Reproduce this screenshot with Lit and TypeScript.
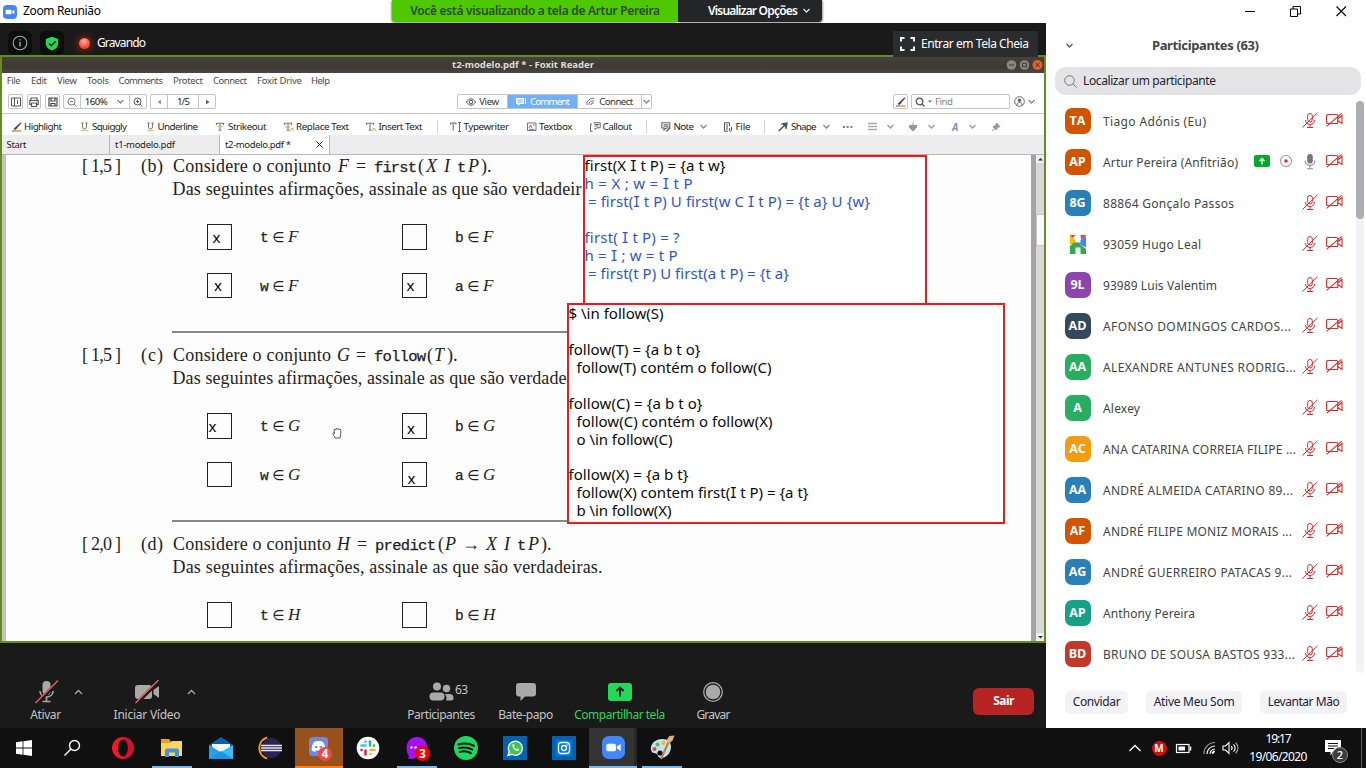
import { LitElement, html, svg, css, nothing } from "lit";
import { customElement } from "lit/decorators.js";

type Item = { x: number; w: number; c: unknown; k?: string };
const it = (x: number, w: number, c: unknown, k = ""): Item => ({ x, w, c, k });

/** Text set to a given measure; the tracking is computed after render. */
const fit = (s: string, w: number, k = "") => html`<span class="fit ${k}" data-w=${w}>${s}</span>`;

/** Lays items in a flex row; the gaps come from the x values in the data. */
const row = (k: string, items: Item[], start = 0) => {
  let end = start;
  return html`<div class="row ${k}">${items.map((i) => {
    const m = i.x - end;
    end = i.x + i.w;
    return html`<div class="cell ${i.k}" style="margin-left:${m}px;width:${i.w}px">${i.c}</div>`;
  })}</div>`;
};

const ic = (w: number, h: number, body: unknown, k = "") =>
  html`<svg class="ic ${k}" width=${w} height=${h} viewBox="0 0 ${w} ${h}" fill="none">${body}</svg>`;

const chev = (c: string, up = false) =>
  ic(9, 6, svg`<path d=${up ? "M1 5 4.5 1.5 8 5" : "M1.5 1 4.5 4 7.5 1"} stroke=${c} stroke-width="1.3"/>`);

const micOff = ic(16, 17, svg`<g stroke="#e02828" stroke-width="1"><rect x="5.7" y="1.5" width="4.6" height="8.5" rx="2.3"/><path d="M3.5 8c0 6 9 6 9 0M8 12.5v3M5 15.5h6M.5 15.5 15.5.8"/></g>`);
const camOff = ic(17, 14, svg`<g stroke="#e02828" stroke-width="1.1"><path d="M12 10.5H1.6a1 1 0 0 1-1-1v-7a1 1 0 0 1 1-1h8.9a1.2 1.2 0 0 1 1.2 1.2v8M11.7 6 16 2.5v8L11.7 7.5M.6 13.4 15.6.4"/></g>`);
const micOn = ic(16, 17, svg`<rect x="5.2" y="1" width="5.6" height="9.5" rx="2.8" fill="#75757f"/><path d="M3.2 7.5c0 6.5 9.6 6.5 9.6 0M8 12.5v3M5 15.7h6" stroke="#8c8c94" stroke-width="1.1"/>`);

const people: [string, string, string, number][] = [
  ["TA", "#d35400", "Tiago Adónis (Eu)", 103],
  ["AP", "#d35400", "Artur Pereira (Anfitrião)", 135],
  ["8G", "#2980b9", "88864 Gonçalo Passos", 131],
  ["", "", "93059 Hugo Leal", 98],
  ["9L", "#8e44ad", "93989 Luis Valentim", 114],
  ["AD", "#34495e", "AFONSO DOMINGOS CARDOS...", 188],
  ["AA", "#27ae60", "ALEXANDRE ANTUNES RODRIG...", 193],
  ["A", "#27ae60", "Alexey", 37],
  ["AC", "#f39c12", "ANA CATARINA CORREIA FILIPE ...", 193],
  ["AA", "#2980b9", "ANDRÉ ALMEIDA CATARINO 89...", 190],
  ["AF", "#d35400", "ANDRÉ FILIPE MONIZ MORAIS ...", 189],
  ["AG", "#2980b9", "ANDRÉ GUERREIRO PATACAS 9...", 189],
  ["AP", "#16a085", "Anthony Pereira", 92],
  ["BD", "#c0392b", "BRUNO DE SOUSA BASTOS 933...", 192],
];

const hLogo = ic(18, 20, svg`<path d="M1 1h5.500l-3 3.500z" fill="#ea4335"/><path d="M1 1.500 6.500 6v5L1 10z" fill="#fbbc05"/><path d="M11.500 1h5.500L12 5.500z" fill="#ea4335"/><path d="M17 1v12.500L8 8.500h3.500V6z" fill="#4285f4"/><path d="M1 20v-8l4-3.500h4L17 15v5h-5.500v-6.500h-5V20z" fill="#34a853"/>`);

type Box = { mark?: [number, number]; sym: string };
type Question = { pts: string; id: string; v: string; head: Item[]; body: [string, number]; rows: Box[][]; rule: boolean };
const tt = "tt", mi = "mi";
const xitp = (x: number): Item[] => [
  it(x, 17, fit("X", 15, mi)), it(x + 18, 9, fit("I", 7, mi)), it(x + 31, 8, fit("t", 8, tt)), it(x + 42, 12, fit("P", 11, mi)), it(x + 55, 11, ")."),
];
const questions: Question[] = [
  {
    pts: "[ 1,5 ]", id: "(b)", v: "F", rule: true, body: ["Das seguintes afirmações, assinale as que são verdadeir", 409],
    head: [it(338, 13, fit("F", 12, mi)), it(356, 12, fit("=", 12)), it(374, 44, fit("first", 43, tt)), it(418, 6, "("), ...xitp(426)],
    rows: [[{ mark: [4.5, 0], sym: "t" }, { sym: "b" }], [{ mark: [6, 0], sym: "w" }, { mark: [3.5, 0], sym: "a" }]],
  },
  {
    pts: "[ 1,5 ]", id: "(c)", v: "G", rule: true, body: ["Das seguintes afirmações, assinale as que são verdade", 394],
    head: [it(337, 13, fit("G", 12, mi)), it(356, 12, fit("=", 12)), it(374, 53, fit("follow", 52, tt)), it(427, 6, "("), it(434, 12, fit("T", 11, mi)), it(447, 12, ").")],
    rows: [[{ mark: [0.5, 0], sym: "t" }, { mark: [4, 2], sym: "b" }], [{ sym: "w" }, { mark: [4.5, 4], sym: "a" }]],
  },
  {
    pts: "[ 2,0 ]", id: "(d)", v: "H", rule: false, body: ["Das seguintes afirmações, assinale as que são verdadeiras.", 430],
    head: [it(337, 15, fit("H", 13, mi)), it(357, 12, fit("=", 12)), it(375, 63, fit("predict", 61, tt)), it(438, 6, "("), it(445, 12, fit("P", 11, mi)), it(462, 20, fit("→", 17)), ...xitp(486)],
    rows: [[{ sym: "t" }, { sym: "b" }]],
  },
];

const question = (q: Question) => html`<section class="q">
  ${row("ln", [it(82, 41, fit(q.pts, 39)), it(141, 24, fit(q.id, 22)), it(173, 160, fit("Considere o conjunto", 158)), ...q.head], 6)}
  ${row("ln", [it(172.500, 432, fit(q.body[0], q.body[1]))], 6)}
  <div class="opts">${q.rows.map((r) => row("opt", r.flatMap((b, i) => [
    it(207 + i * 195, 25, b.mark ? html`<span style="margin-left:${b.mark[0]}px;margin-top:${b.mark[1] * 2}px">x</span>` : nothing, "box"),
    it(260 + i * 195, 41, html`<span class="tt">${b.sym}</span><span class="in">∈</span><span class="mi">${q.v}</span>`, "sym"),
  ]), 6))}</div>
  ${q.rule ? html`<div class="rule"></div>` : nothing}
</section>`;

const noteLine = (pad: number, s: string, w: number, k = "") =>
  html`<div class="nl ${k}" style="padding-left:${pad}px">${w ? html`<span class="fit" data-w=${w}>${s.split(/(I)/).map((p) => (p === "I" ? html`<span class="ci">I</span>` : p))}</span>` : nothing}</div>`;

const U = (extra: unknown = nothing) => ic(10, 10, svg`<path d="M2.5 1v4a2 2 0 0 0 4 0V1M1.3 1h2.4M5.4 1h2.4" stroke="#777" stroke-width="1"/>${extra}`);
const pen = ic(11, 10, svg`<path d="M9.5.5 3.5 6l-1 1 2 1L10.5 1z" fill="#444"/><path d="M1 9h3" stroke="#555"/><path d="M4 9h6.5" stroke="#f0a030" stroke-width="1.6"/>`);
const T = (extra: unknown) => ic(11, 10, svg`<path d="M.5 3V1.3h7V3M4 1.3v7M2.6 8.3h2.8" stroke="#777" stroke-width="1.1"/>${extra}`);
const grayChev = chev("#888");

const zoomCam = (s: number) => html`<svg class="ic" width=${s} height=${s} viewBox="0 0 24 24"><rect width="24" height="24" rx="7" fill="#4087fc"/><rect x="4.5" y="8" width="10" height="8" rx="2" fill="#fff"/><path d="m15.5 11 4-2.7v7.4l-4-2.7z" fill="#fff"/></svg>`;

const tools: Item[] = [
  it(20.500, 50, html`${ic(28, 26, svg`<rect x="10.500" y="2" width="8" height="14" rx="4" fill="#a9a9a9"/><path d="M8 12c0 8 13 8 13 0M14.500 18v4M10.500 22.500h8" stroke="#a9a9a9" stroke-width="1.600"/><path d="M4 25 27 2" stroke="#1a1a1a" stroke-width="3.600"/><path d="M3.500 24 26 1.500" stroke="#ef5b5b" stroke-width="1.400"/>`)}${fit("Ativar", 31)}`),
  it(74, 9, html`${chev("#a9a9a9", true)}`, "caret"),
  it(107, 80, html`${ic(28, 26, svg`<rect x="2" y="6" width="17" height="14" rx="3" fill="#a9a9a9"/><path d="M20.5 11 26 7v12l-5.500-4z" fill="#a9a9a9"/><path d="M3 25 26 2" stroke="#1a1a1a" stroke-width="3.600"/><path d="M2.500 24 25.500 1" stroke="#ef5b5b" stroke-width="1.400"/>`)}${fit("Iniciar Vídeo", 67)}`),
  it(187, 9, html`${chev("#a9a9a9", true)}`, "caret"),
  it(401, 80, html`<div class="ppl">${ic(25, 26, svg`<g fill="#a9a9a9"><circle cx="8" cy="7.500" r="4"/><rect x=".5" y="13.500" width="15" height="8" rx="4"/><circle cx="17.500" cy="9.500" r="3.700"/><path d="M15.500 15h5a4 4 0 0 1 4 4c0 2-1 2.500-3 2.500h-4.500c1-3 .5-5-1.500-6.500z"/></g>`)}<span class="n63">${fit("63", 13)}</span></div>${fit("Participantes", 68)}`),
  it(490, 71, html`${ic(22, 26, svg`<path d="M4 4h14a3 3 0 0 1 3 3v7.500a3 3 0 0 1-3 3h-8L5.500 22v-4.500H4a3 3 0 0 1-3-3V7a3 3 0 0 1 3-3z" fill="#a9a9a9"/>`)}${fit("Bate-papo", 55)}`),
  it(569, 101, html`${ic(24, 26, svg`<rect y="4" width="24" height="18" rx="3" fill="#23d959"/><path d="M12 17.500V9M8.300 12 12 8.500l3.700 3.500" stroke="#1a1a1a" stroke-width="1.900"/>`)}<span class="grn">${fit("Compartilhar tela", 91)}</span>`),
  it(683, 60, html`${ic(22, 26, svg`<circle cx="11" cy="13" r="9.300" stroke="#a9a9a9" stroke-width="1.300"/><circle cx="11" cy="13" r="7.300" fill="#a9a9a9"/>`)}${fit("Gravar", 34)}`),
  it(973, 61, fit("Sair", 21), "leave"),
];

const task: Item[] = [
  it(0, 48, ic(16, 16, svg`<path d="M0 2.200 6.600 1.300v6.300H0zM7.400 1.200 16 0v7.600H7.400zM0 8.400h6.600v6.300L0 13.800zM7.400 8.400H16V16l-8.600-1.200z" fill="#fff"/>`)),
  it(48, 48, ic(18, 18, svg`<circle cx="11.500" cy="6.500" r="5" stroke="#fff" stroke-width="1.400"/><path d="M8 10 1.500 16.500" stroke="#fff" stroke-width="1.500"/>`)),
  it(99, 48, ic(24, 24, svg`<path fill-rule="evenodd" d="M12 1a11 11 0 1 1 0 22 11 11 0 0 1 0-22zm0 2.500c-3 0-5 3.800-5 8.500s2 8.500 5 8.500 5-3.800 5-8.500-2-8.500-5-8.500z" fill="#f0162c"/><path d="M14 1.200c12 2 12 19.600 0 21.600-2 .2-2.500-1.500-1-2.500 5-3 5-13.600 0-16.600-1.500-1-1-2.700 1-2.500z" fill="#b3122a" opacity=".6"/>`)),
  it(152, 40, ic(24, 22, svg`<path d="M1 2h8l2 3h11v14H1z" fill="#e8a60e"/><path d="M1 6h9l2-2h10v15H1z" fill="#fcd462"/><path d="M5 20v-6.500a2 2 0 0 1 2-2h10a2 2 0 0 1 2 2V20h-4v-4.500H9V20z" fill="#4593d4"/>`), "on"),
  it(197, 48, ic(24, 24, svg`<path d="M0 9 12 1l12 8v14H0z" fill="#0c5fb0"/><path d="M3 8h18v9H3z" fill="#f5f5f5"/><path d="m0 9 13 8L0 23z" fill="#2aa0ea"/><path d="M24 9v14H0z" fill="#35c0f5"/><path d="m0 23 12-8 12 8z" fill="#1d95e6"/>`)),
  it(246, 48, ic(24, 24, svg`<path d="M9 1.500a11 11 0 0 0 0 21" stroke="#f59e1c" stroke-width="2"/><circle cx="13.500" cy="12" r="10" fill="#2c2255"/><path d="M3 9.500h21M3 12h21M3 14.500h21" stroke="#e8e6f0" stroke-width="1.400"/>`)),
  it(295, 48, html`${ic(22, 22, svg`<rect x="1" y="1" width="19" height="19" rx="3.500" fill="#7289da"/><path d="M6 6c3-1.500 6-1.500 9 0 1.700 2.500 2.500 5 2.300 8.500L14 16l-1-1.500H8L7 16l-3.300-1.500C3.500 11 4.300 8.500 6 6z" fill="#fff"/><circle cx="8.200" cy="11" r="1.300" fill="#7289da"/><circle cx="12.700" cy="11" r="1.300" fill="#7289da"/>`)}<b class="badge coral">4</b>`, "disc"),
  it(344, 48, ic(24, 24, svg`<circle cx="12" cy="12" r="11.300" fill="#fff"/><g stroke-width="2.600" stroke-linecap="round"><path d="M5.500 9.500H9.500M9.500 5.500v.1" stroke="#36c5f0"/><path d="M14 5.500v4M18 9.500v.1" stroke="#2eb67d"/><path d="M14.500 14h4M14.500 18v.1" stroke="#ecb22e"/><path d="M9.500 14.500v4M5.500 14v.1" stroke="#e01e5a"/></g>`)),
  it(397, 40, html`${ic(24, 24, svg`<path d="M12 1c6 0 10 4.500 10 9.500S19 20 14 20.500L8 23H3c1-1 1-2 .5-4C1.500 16.500 1.500 14 1.700 11 2 5 6 1 12 1z" fill="#a412f2"/><g fill="#fff"><circle cx="6.500" cy="11.500" r="1.200"/><circle cx="10.500" cy="11.500" r="1.200"/></g>`)}<b class="badge red">3</b>`, "on"),
  it(442, 48, ic(24, 24, svg`<circle cx="12" cy="12" r="12" fill="#1ed760"/><path d="M4.500 8.500c5-1.600 11-1 15.500 1.300M5 12.300c4.500-1.300 9.500-.7 13.300 1.400M5.800 16c3.700-1.200 8-.7 11 1.200" stroke="#101010" stroke-width="2" stroke-linecap="round"/>`)),
  it(491, 48, ic(24, 24, svg`<rect width="24" height="24" fill="#0063b1"/><path d="M5 19.500 6.200 15.500a7 7 0 1 1 2.700 2.800z" fill="#41c351" stroke="#fff" stroke-width="1.300"/><path d="M9.500 8.500c-1 3 3 7 6 6.500l.7-1.700-2-1-1 1c-1-.4-1.800-1.300-2.200-2.200l.8-1-.8-2z" fill="#fff"/>`)),
  it(540, 48, ic(24, 24, svg`<rect width="24" height="24" fill="#0063b1"/><rect x="4" y="4" width="16" height="16" fill="#0078d7"/><rect x="6.500" y="6.500" width="11" height="11" rx="3" stroke="#fff" stroke-width="1.300"/><circle cx="12" cy="12" r="2.500" stroke="#fff" stroke-width="1.300"/><circle cx="15" cy="9" r=".8" fill="#fff"/>`)),
  it(589, 48, zoomCam(23), "zm"),
  it(642, 40, ic(26, 26, svg`<path d="M2 15C1 9 6 4 13 4c6 0 9 3 9 8s-4 11-10 11c-3 0-3-3-4-4s-5 0-6-4z" fill="#bfe3f2"/><circle cx="14.500" cy="8" r="2" fill="#f5b81c"/><circle cx="8.500" cy="9.500" r="2" fill="#5bb848"/><circle cx="5.500" cy="14" r="2" fill="#e04a3a"/><circle cx="11" cy="18" r="2.600" fill="#101010"/><path d="M12 24 20 6" stroke="#c77a2e" stroke-width="2"/><path d="m17.500 5 3-4 5-.5-2 5-3.500 3z" fill="#e3b07b"/>`), "on"),
];

const tray: Item[] = [
  it(1128, 14, ic(14, 8, svg`<path d="M1.500 7 7 1.500 12.500 7" stroke="#fff" stroke-width="1.300"/>`)),
  it(1151, 16, html`<span class="mega">M</span>`),
  it(1175, 17, ic(17, 11, svg`<rect x="1.500" y="1.500" width="12.500" height="8" stroke="#fff" stroke-width="1.200"/><rect x="3.500" y="3.500" width="6.500" height="4" fill="#fff"/><path d="M15.500 3.500v4" stroke="#fff" stroke-width="1.500"/>`)),
  it(1201, 15, ic(14, 14, svg`<g stroke="#fff" stroke-width="1.100"><path d="M10 12.500 12.500 10" stroke-width="2"/><path d="M8 13a5 5 0 0 1 5-5M5 13a8 8 0 0 1 8-8" /><path d="M2 13A11 11 0 0 1 13 1.500" opacity=".6"/></g>`)),
  it(1222, 17, ic(17, 14, svg`<g stroke="#fff" stroke-width="1.100"><path d="M1 5h2.500L7 1.500v11L3.500 9H1z"/><path d="M9.300 5c1 1.200 1 2.800 0 4M11.500 3.300c2 2.200 2 5.200 0 7.400"/><path d="M13.700 1.700c3 3.200 3 7.400 0 10.600" opacity=".7"/></g>`)),
  it(1246, 64, html`${fit("19:17", 26)}${fit("19/06/2020", 58)}`, "clock"),
  it(1324, 26, html`${ic(18, 18, svg`<path d="M1 1h16v12H9l-2.500 3.500V13H1z" fill="#fff"/><path d="M4 4.500h10M4 7h10M4 9.500h6" stroke="#101010" stroke-width="1"/>`)}<b class="nb">2</b>`, "ac"),
  it(1361, 5, nothing, "peek"),
];

@customElement("app-root")
export class AppRoot extends LitElement {
  static styles = css`
    :host { display: grid; grid-template-rows: 23px 705px 40px; width: 1366px; height: 768px; overflow: hidden; background: #fff; font: 12px/1.2 "Noto Sans", sans-serif; color: #232333; }
    * { box-sizing: border-box; }
    .row { display: flex; align-items: center; }
    .cell { flex: none; display: flex; align-items: center; white-space: nowrap; }
    .ic { display: block; flex: none; overflow: visible; }
    .fit { display: inline-block; white-space: pre; flex: none; }
    .titlebar { height: 23px; color: #000; }
    .green { height: 22px; margin-bottom: 1px; background: #4dc802; color: #2f4a20; justify-content: center; font-weight: 600; border-radius: 0 0 0 4px; box-shadow: -1px 1px 2px #999; }
    .vopt { height: 22px; margin-bottom: 1px; background: #242528; color: #fff; font-weight: 600; justify-content: center; padding-left: 19px; gap: 5px; border-radius: 0 0 4px 0; box-shadow: 1px 1px 2px #999; }
    .main { display: flex; }
    .left { width: 1046px; background: #1a1a1a; display: flex; flex-direction: column; }
    .head { height: 32px; align-items: flex-start; color: #fff; }
    .head .cell { margin-top: 8px; height: 24px; }
    .chip { background: #0c0e0d; border-radius: 5px; justify-content: center; }
    .recdot { width: 11px; height: 11px; border-radius: 50%; background: radial-gradient(circle at 45% 30%, #ffb0a0, #ff4a38 60%, #e83020); box-shadow: 0 0 7px 2px #7a2408; margin: auto; }
    .head .full { height: 26px; background: #2b2c2e; padding-left: 7px; gap: 6px; position: relative; z-index: 2; }
    .share { height: 588px; border: 2px solid #648c1e; display: flex; flex-direction: column; background: #fff; position: relative; }
    .fx { font-size: 9px; color: #333; }
    .fbar { height: 16px; background: linear-gradient(#45413b, #3d3a35 60%, #4a4643); color: #dfdbd2; font-weight: 700; font-size: 9.500px; }
    .fbar .cell { padding-bottom: 1px; }
    .menu { height: 17px; color: #4c4c4c; font-size: 9.500px; padding-bottom: 1px; }
    .tb { height: 24px; border-bottom: 1px solid #c8c8c8; }
    .tb .b { height: 15px; border: 1px solid #c4c4c4; border-radius: 2px; justify-content: center; background: #fff; }
    .grp { justify-content: space-between; }
    .grp > * { height: 13px; display: flex; align-items: center; justify-content: center; border-right: 1px solid #c4c4c4; }
    .grp > *:last-child { border: 0; }
    .g17 { width: 17px; } .g49 { width: 49px; gap: 9px; color: #222; } .g16 { width: 16px; } .g31 { width: 31px; color: #222; } .g50 { width: 50px; gap: 3px; } .g70 { width: 70px; gap: 4px; background: #6fb0f9; color: #fff; } .g64 { width: 64px; gap: 4px; } .g9 { width: 9px; }
    .tb .fit { font-size: 9.700px; }
    .fx .find { justify-content: flex-start; padding-left: 3px; gap: 3px; color: #888; }
    .rib { height: 21px; padding-top: 4px; color: #222; font-size: 9.800px; }
    .sep { height: 13px; background: #d4d4d4; }
    .tabs { height: 20px; background: #ededef; border-bottom: 1px solid #b8b8b8; color: #222; font-size: 9.500px; align-items: stretch; }
    .tab { border-right: 1px solid #b8b8b8; padding-left: 5px; }
    .tab.act { background: #fff; justify-content: space-between; padding-right: 6px; }
    .alet { color: #7d92b5; font: italic 700 10px "Open Sans", sans-serif; }
    .doc { flex: 1; min-height: 0; display: flex; }
    .gut { width: 4px; background: #c3c3c5; }
    .page { width: 1025px; background: #fdfdfd; overflow: hidden; font: 18px/23px "Liberation Serif", serif; color: #222; position: relative; }
    .edge { width: 5px; background: #a5a3a5; }
    .sb { flex: 1; background: #dad8d6; display: flex; flex-direction: column; align-items: center; }
    .sb .arr { height: 8px; width: 100%; display: flex; justify-content: center; align-items: center; background: #eee; }
    .sb .thumb { margin-top: 51px; height: 32px; width: 100%; background: #fafafa; border: 1px solid #c4c4c4; border-right: 0; }
    .sb .down { margin-top: auto; }
    .q { height: 189px; }
    .row.ln { height: 23px; align-items: baseline; }
    .ln .cell { align-items: baseline; height: 22px; line-height: 22px; }
    .ln + .row.ln { height: 24px; }
    .mi { font-style: italic; } .tt { font-family: "Liberation Mono", monospace; font-size: 15.500px; line-height: 1; -webkit-text-stroke: .25px #222; }
    .opts { padding-top: 22px; display: flex; flex-direction: column; gap: 23px; }
    .opt { height: 25.500px; }
    .box { height: 25.500px; border: 1.500px solid #222; font: 15px/20px "Noto Sans", sans-serif; color: #000; }
    .row .sym { justify-content: space-between; align-items: baseline; }
    .sym .tt { font-size: 14.500px; } .in { font: 14px "DejaVu Sans", sans-serif; }
    .sym .mi { font-size: 17px; width: 13px; }
    .rule { margin: 33px 0 0 166px; width: 396px; height: 1.500px; background: #888; }
    .note { position: absolute; background: #fff; border: 2px solid #f61818; color: #0a0a0a; font: 15px/16px "Noto Sans", sans-serif; }
    .n1 { left: 581px; top: 98px; width: 344px; height: 150px; }
    .n2 { left: 565px; top: 246px; width: 438px; height: 221px; }
    .n2 .nl { line-height: 17px; }
    .nl { height: 17.950px; } .blue { color: #2f55c8; }
    .n1 .fit, .n2 .fit { margin-left: -0.500px; }
    .ci { font-family: Inter, sans-serif; font-feature-settings: "cv08", "ss02"; font-size: 14px; }
    .hand { position: absolute; left: 330px; top: 370px; }
    .ztools { flex: 1; color: #c4c4c4; align-items: flex-start; padding-top: 36px; }
    .ztools .cell { flex-direction: column; gap: 3px; }
    .ztools .caret { padding-top: 10px; } 
    .ztools .leave { height: 27px; margin-top: 9px; background: #b72424; color: #fff; border-radius: 6px; font-weight: 700; justify-content: center; }
    .ppl { display: flex; padding-left: 28px; width: 80px; gap: 1px; } .n63 { padding-top: 4px; }
    .grn { color: #23d959; }
    .right { width: 320px; background: #fff; display: flex; flex-direction: column; }
    .ph { height: 44px; padding-top: 2px; color: #444; font-weight: 700; font-size: 13px; }
    .search { margin: 0 5px 0 9px; height: 28px; border-radius: 11px; background: #e4e4e7; display: flex; align-items: center; gap: 6px; padding-left: 9px; }
    .list { height: 580px; margin-top: 5px; display: flex; justify-content: space-between; }
    .names { width: 300px; }
    .p { height: 41px; display: flex; align-items: center; padding-left: 18.500px; color: #444; }
    .av { width: 26px; height: 26px; border-radius: 7px; color: #fff; font: 700 12.500px/26px "Open Sans", sans-serif; text-align: center; margin-right: 12.500px; display: grid; place-items: center; flex: none; }
    .pn { flex: 1; padding-top: 3px; } .pi { display: flex; align-items: center; gap: 8px; margin-right: 3px; }
    .pi { margin-top: -1px; }
    .track { width: 8px; margin: 1px 2px 7px 0; background: #f3f3f7; border-radius: 4px; height: 572px; }
    .track i { display: block; height: 118px; border-radius: 4px; background: #aeaeb5; }
    .btns { height: 23px; margin-top: 11px; }
    .btns .cell { height: 23px; background: #f2f2f7; border-radius: 5px; justify-content: center; }
    .task { background: #101010; display: flex; }
    .task .row { height: 40px; } .task .cell { height: 40px; justify-content: center; position: relative; }
    .on { border-bottom: 2px solid #76b9ed; padding-top: 1px; }
    .disc { background: #98511b; border-bottom: 2px solid #ff7f0e; }
    .zm { background: #333; border-bottom: 2px solid #76b9ed; box-shadow: inset -3px 0 #272727; }
    .badge { position: absolute; width: 14px; height: 14px; border-radius: 50%; color: #fff; font: 700 12px/14px "Open Sans", sans-serif; text-align: center; left: 23px; top: 19px; }
    .coral { background: #f04747; } .red { background: #f00; left: 18px; top: 18px; width: 15px; height: 15px; line-height: 15px; }
    .mega { width: 15px; height: 15px; border-radius: 50%; background: #d9090f; color: #fff; font: 700 10px/15px "Open Sans", sans-serif; text-align: center; }
    .task .clock { flex-direction: column; color: #fff; gap: 4px; }
    .ac .ic { margin: -1px 9px 0 0; }
    .nb { position: absolute; left: 8px; top: 19px; width: 16px; height: 16px; border-radius: 50%; background: #3c3c3c; border: 1px solid #888; color: #fff; font: 600 11px/14px "Open Sans", sans-serif; text-align: center; }
    .peek { border-left: 1px solid #555; }
  `;

  updated() {
    this.renderRoot.querySelectorAll<HTMLElement>(".fit").forEach((el) => {
      el.style.letterSpacing = "0px";
      const n = Math.max((el.textContent || "").length - 1, 1);
      el.style.letterSpacing = `${((Number(el.dataset.w) - el.getBoundingClientRect().width) / n).toFixed(3)}px`;
    });
  }

  titlebar() {
    return row("titlebar", [
      it(3, 14, zoomCam(14)), it(23, 80, fit("Zoom Reunião", 78)),
      it(392, 286, fit("Você está visualizando a tela de Artur Pereira", 250), "green"),
      it(678, 144, html`${fit("Visualizar Opções", 90)}${chev("#ddd")}`, "vopt"),
      it(1245, 11, ic(11, 11, svg`<path d="M0 5.500h10" stroke="#000"/>`)),
      it(1290, 11, ic(11, 11, svg`<path d="M.5 3h7v7.500h-7zM3 3V.5h7.500V8H7.500" stroke="#000"/>`)),
      it(1336, 11, ic(11, 11, svg`<path d="m.5.500 9.500 9.500M10 .5.500 10" stroke="#000" stroke-width="1.100"/>`)),
    ]);
  }

  foxit() {
    const w = (x: number, s: string, n: number) => it(x, n, fit(s, n));
    return html`<div class="fx">
      ${row("fbar", [w(452, "t2-modelo.pdf * - Foxit Reader", 142), it(1006, 37, ic(37, 12, svg`<circle cx="5.500" cy="6" r="4.800" fill="#8a8680"/><circle cx="18.500" cy="6" r="4.800" fill="#8a8680"/><circle cx="31.500" cy="6" r="5" fill="#ee5a31"/><path d="M3 6h5M16.500 4.200h4v3.600h-4zM29.500 4l4 4m0-4-4 4" stroke="#3c3935" stroke-width="1"/>`))], 2)}
      ${row("menu", [w(6.700, "File", 14), w(31, "Edit", 16), w(57, "View", 20), w(87, "Tools", 22), w(118.500, "Comments", 44.500), w(173, "Protect", 30), w(213, "Connect", 34), w(257, "Foxit Drive", 45), w(311, "Help", 19)], 2)}
      ${row("tb", [
        it(8, 15, ic(10, 10, svg`<path d="M.5 1h9v8h-9zM3.500 1v8M6.500 3v4M2 3v.1M2 5v.1" stroke="#555"/>`), "b"),
        it(27, 14, ic(10, 10, svg`<path d="M2 3V1h6v2M2 7.500H.8v-4h8.400v4H8M2.500 6h5v3.500h-5z" stroke="#555" stroke-width="1.200"/>`), "b"),
        it(45, 15, ic(10, 10, svg`<path d="M1 1h8v8H1zM3 1v3h4V1M3 9V6.500h4V9" stroke="#444" stroke-width="1.200"/>`), "b"),
        it(63, 84, html`<span class="g17">${ic(10, 10, svg`<circle cx="4.500" cy="4.500" r="3.500" stroke="#777"/><path d="m7 7 2.500 2.500M3 4.500h3" stroke="#777"/>`)}</span><span class="g49">${fit("160%", 23)}${grayChev}</span><span class="g16">${ic(10, 10, svg`<circle cx="4.500" cy="4.500" r="3.500" stroke="#555"/><path d="m7 7 2.500 2.500M2.800 4.500h3.400M4.500 2.800v3.400" stroke="#555"/>`)}</span>`, "b grp"),
        it(150, 66, html`<span class="g17">${ic(5, 6, svg`<path d="M4 .5v5L.5 3z" fill="#999"/>`)}</span><span class="g31">${fit("1/5", 13)}</span><span class="g16">${ic(5, 6, svg`<path d="M1 .5v5L4.500 3z" fill="#666"/>`)}</span>`, "b grp"),
        it(457, 195, html`<span class="g50">${ic(10, 10, svg`<path d="M.5 5C3 .8 7 .8 9.500 5 7 9.200 3 9.200.5 5z" stroke="#555"/><circle cx="5" cy="5" r="1.800" stroke="#555"/>`)}${fit("View", 20)}</span><span class="g70">${ic(10, 10, svg`<path d="M0 1h8v6H4L2 9V7H0zM9 1h1v6H9z" fill="#fff"/><path d="M1.500 3h5M1.500 5h5" stroke="#6fb0f9"/>`)}${fit("Comment", 40)}</span><span class="g64">${ic(9, 9, svg`<path d="M1 8V5l3-3 4-1M3 8V6l2-2h3M5 8l1-2h2" stroke="#777"/>`)}${fit("Connect", 34)}</span><span class="g9">${grayChev}</span>`, "b grp"),
        it(893, 15, pen, "b"),
        it(911, 99, html`${ic(10, 10, svg`<circle cx="4.500" cy="4.500" r="3.300" stroke="#555" stroke-width="1.300"/><path d="m7 7 2.500 2.500" stroke="#555" stroke-width="1.300"/>`)}${ic(4, 3, svg`<path d="M0 .5h4L2 2.500z" fill="#555"/>`)}${fit("Find", 18)}`, "b find"),
        it(1014, 11, ic(11, 11, svg`<circle cx="5.500" cy="5.500" r="4.800" stroke="#666"/><circle cx="5.500" cy="4.300" r="1.800" fill="#666"/><path d="M3 10V8c1-2 4-2 5 0v2" stroke="#666"/>`)),
        it(1027, 9, grayChev),
      ], 2)}
      ${row("rib", [
        it(11, 11, pen), w(24, "Highlight", 38),
        it(80, 10, U(svg`<path d="m1 9 1.500-1L4 9l1.500-1L7 9l1.500-1" stroke="#e8b860"/>`)), w(92, "Squiggly", 35),
        it(146, 10, U(svg`<path d="M1 8.700h7" stroke="#e8b860"/>`)), w(157.500, "Underline", 40.500),
        it(216, 10, T(svg`<path d="M1.500 4.500h6" stroke="#e8b860"/>`)), w(228, "Strikeout", 38.500),
        it(284, 11, T(svg`<path d="M1 5h5M6 9l2-3 2 3" stroke="#e8a030"/>`)), w(296, "Replace Text", 53),
        it(366, 11, T(svg`<path d="m6 9 2-3 2 3" stroke="#e8a030"/>`)), w(378.500, "Insert Text", 44),
        it(437, 1, nothing, "sep"),
        it(450, 11, ic(11, 10, svg`<path d="M.5 2.500V1h5.500v1.500M3.200 1v7.500M8 .5h3M8 9.500h3M9.500.5v9" stroke="#666"/>`)), w(463.500, "Typewriter", 45.500),
        it(527, 10, ic(10, 10, svg`<path d="M.5 1h8.500v7.500H.5zM2 6l1.500-3L5 6M6 3h2M2 7.300h5.500" stroke="#777"/>`)), w(539, "Textbox", 33.500),
        it(590, 11, ic(11, 10, svg`<path d="M3.500.8h6.700v5H7L5 7.500V5.800M4.500 2.500h4.500M4.500 4h3.500M2 2H.6v7.300h2" stroke="#666"/>`)), w(602.500, "Callout", 29.500),
        it(646, 1, nothing, "sep"),
        it(661, 11, ic(10, 10, svg`<path d="M.8.800h8v5.200H5L3 8V6H.8zM2.500 2.700h5M2.500 4.300h5" stroke="#666" stroke-width="1.100"/><path d="m5 9.500 4-3.500" stroke="#666" stroke-width="1.500"/>`)), w(673.500, "Note", 20.500),
        it(699, 9, grayChev),
        it(723, 10, ic(10, 10, svg`<path d="M6.500 4V.8h-5v8.400H5M3 3h2M3 5h2M3 7h2M6.500 6v2.500c0 1.500 2 1 2-.5V5" stroke="#555"/>`)), w(735.500, "File", 15),
        it(764, 1, nothing, "sep"),
        it(778, 10, ic(10, 10, svg`<path d="M.8 9 7 3M3 2l6-1-1 6" stroke="#444" stroke-width="1.200"/><path d="M4 2 9 1 8 6z" fill="#555"/>`)), w(791, "Shape", 25.500),
        it(822, 9, grayChev),
        it(843, 10, ic(10, 4, svg`<path d="M0 2h2M3.700 2h2M7.400 2h2" stroke="#555" stroke-width="1.400"/>`)),
        it(868, 10, ic(10, 10, svg`<path d="M0 1.500h9M0 4.500h9M0 7.500h9" stroke="#aaa" stroke-width="1.500"/>`)), it(886, 9, chev("#999")),
        it(908, 10, ic(10, 10, svg`<path d="M5 .5v3M1 5h8L5 9z" stroke="#999" fill="#999"/><path d="M1 4h8" stroke="#999" stroke-width="2"/>`)), it(927, 9, chev("#999")),
        it(952, 9, html`<span class="alet">A</span>`), it(968, 9, chev("#999")),
        it(991, 10, ic(10, 10, svg`<path d="M5.500 1 9 4.500 6.500 5.500 5 8 2 5l2.500-1.500zM3.500 6.500 1 9" fill="#999" stroke="#999"/>`)),
      ], 2)}
      ${row("tabs", [
        it(1.500, 108.500, fit("Start", 20), "tab"),
        it(110, 110, fit("t1-modelo.pdf", 60), "tab"),
        it(220, 110, html`${fit("t2-modelo.pdf *", 66)}${ic(7, 7, svg`<path d="m.5.500 6 6m0-6-6 6" stroke="#333"/>`)}`, "tab act"),
      ], 2)}
    </div>`;
  }

  render() {
    const search = ic(13, 13, svg`<circle cx="5.500" cy="5.500" r="4.800" stroke="#747487"/><path d="m9 9 3.500 3.500" stroke="#747487"/>`);
    return html`
      ${this.titlebar()}
      <div class="main">
        <div class="left">
          ${row("head", [
            it(8, 24, ic(16, 16, svg`<circle cx="8" cy="8" r="6.800" stroke="#a8a8a8" stroke-width="1.100"/><path d="M8 7v4.500M8 4.300v1.300" stroke="#a8a8a8" stroke-width="1.400"/>`), "chip"),
            it(40, 24, ic(14, 15, svg`<path d="M7 .8 13.200 3v5c0 3-3 5.200-6.200 6.500C3.800 13.200.8 11 .8 8V3z" fill="#23d959"/><path d="m4 7.500 2.300 2.200L10.500 5.500" stroke="#111" stroke-width="1.500"/>`), "chip"),
            it(76, 16, html`<i class="recdot"></i>`), it(97, 50, fit("Gravando", 49)),
            it(893, 145, html`${ic(15, 14, svg`<path d="M1 4.500V1h3.500M10.500 1H14v3.500M14 9.500V13h-3.500M4.500 13H1V9.500" stroke="#fff" stroke-width="1.900"/>`)}${fit("Entrar em Tela Cheia", 108)}`, "full"),
          ])}
          <div class="share">
            ${this.foxit()}
            <div class="doc">
              <div class="gut"></div>
              <div class="page">${questions.map(question)}</div>
              <div class="edge"></div>
              <div class="sb"><div class="arr">${ic(5, 4, svg`<path d="M0 3.500h5L2.500 1z" fill="#333"/>`)}</div><div class="thumb"></div><div class="arr down">${ic(5, 4, svg`<path d="M0 1h5L2.500 3.500z" fill="#333"/>`)}</div></div>
            </div>
            <div class="note n1">
              ${noteLine(0, "first(X I t P) = {a t w}", 141)}${noteLine(0, "h = X ; w = I t P", 108, "blue")}${noteLine(3.500, "= first(I t P) U first(w C I t P) = {t a} U {w}", 282, "blue")}
              ${noteLine(0, "", 0)}${noteLine(0, "first( I t P) = ?", 95, "blue")}${noteLine(0, "h = I ; w = t P", 93, "blue")}${noteLine(3.500, "= first(t P) U first(a t P) = {t a}", 201, "blue")}
            </div>
            <div class="note n2">
              ${noteLine(0, "$ \\in follow(S)", 95)}${noteLine(0, "", 0)}
              ${noteLine(0, "follow(T) = {a b t o}", 132)}${noteLine(8, "follow(T) contém o follow(C)", 195)}${noteLine(0, "", 0)}
              ${noteLine(0, "follow(C) = {a b t o}", 134)}${noteLine(8, "follow(C) contém o follow(X)", 196)}${noteLine(8, "o \\in follow(C)", 96)}${noteLine(0, "", 0)}
              ${noteLine(0, "follow(X) = {a b t}", 120)}${noteLine(8, "follow(X) contem first(I t P) = {a t}", 232)}${noteLine(8, "b \\in follow(X)", 95)}
            </div>
            ${ic(11, 12, svg`<path d="M3 11C2.500 9 .8 7.500 1 6c.3-.8 1.200-.5 1.500.5L2 3c.2-1 1.200-1 1.500 0 0-2 1.500-2 1.800-.4 0-1.400 1.700-1.400 1.900.2.2-1 1.600-.8 1.600.3v4L8 11z" fill="#fff" stroke="#333" stroke-width=".8"/>`, "hand")}
          </div>
          ${row("ztools", tools)}
        </div>
        <aside class="right">
          ${row("ph", [it(1065, 9, chev("#555566")), it(1152, 108, fit("Participantes (63)", 107))], 1046)}
          <div class="search">${search}${fit("Localizar um participante", 133)}</div>
          <div class="list">
            <div class="names">${people.map(([a, c, n, w], i) => html`<div class="p">
              ${a ? html`<span class="av" style="background:${c}">${a}</span>` : html`<span class="av">${hLogo}</span>`}
              <span class="pn">${fit(n, w)}</span>
              <span class="pi">${i === 1
                ? html`${ic(16, 12, svg`<rect width="16" height="12" rx="2" fill="#0aa72e"/><path d="M8 9.500V4M5.500 6 8 3.500 10.500 6" stroke="#fff" stroke-width="1.300"/>`)}${ic(16, 14, svg`<circle cx="8" cy="7" r="5.500" stroke="#999" stroke-width="1.100"/><circle cx="8" cy="7" r="1.700" fill="#e02828"/>`)}${micOn}`
                : micOff}${camOff}</span>
            </div>`)}</div>
            <div class="track"><i></i></div>
          </div>
          ${row("btns", [it(1065, 63, fit("Convidar", 48)), it(1146, 96, fit("Ative Meu Som", 81)), it(1260, 87, fit("Levantar Mão", 72))], 1046)}
        </aside>
      </div>
      <div class="task">${row("", task)}${row("", tray, 682)}</div>
    `;
  }
}
